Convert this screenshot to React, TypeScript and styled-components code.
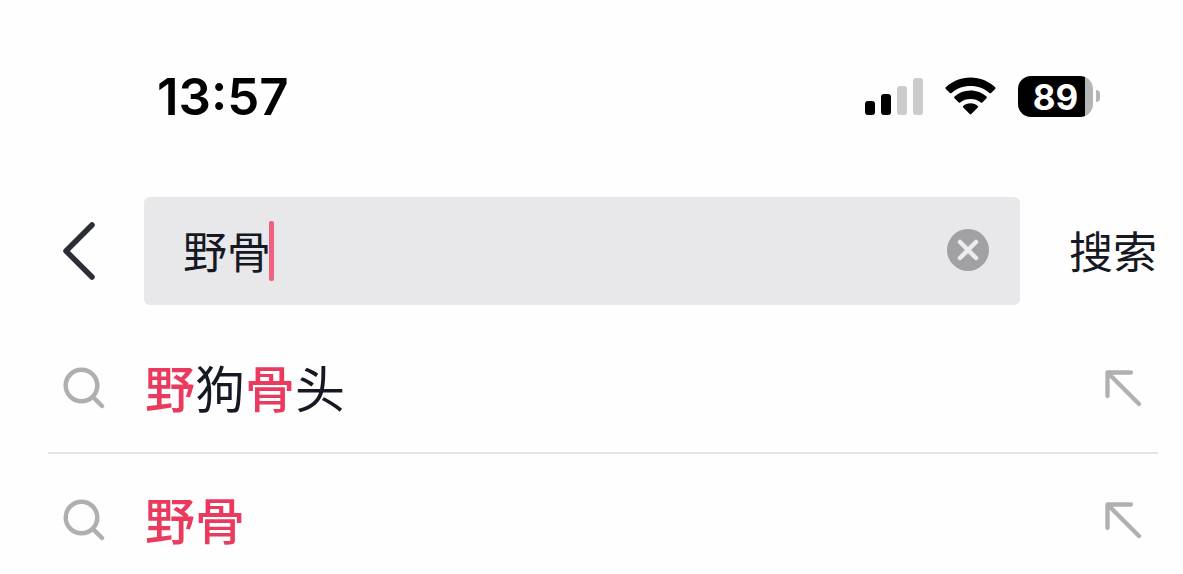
import React, { useState } from "react";
import styled, { createGlobalStyle } from "styled-components";

const cjk = `"Noto Sans CJK SC", "Noto Sans", sans-serif`;
const latin = `Inter, "Liberation Sans", sans-serif`;

const GlobalStyle = createGlobalStyle`
  *, *::before, *::after { box-sizing: border-box; }
  body { margin: 0; background: #fefefe; color: #161823; font-family: ${cjk}; }
  button, input { font: inherit; color: inherit; border: 0; padding: 0; margin: 0; background: none; }
  button { cursor: pointer; }
  svg { display: block; flex: none; }
`;

const Screen = styled.div`
  display: flex;
  flex-direction: column;
`;

const StatusBar = styled.header`
  display: flex;
  align-items: center;
  justify-content: space-between;
  padding: 67px 83px 0 157px;
  height: 127px;
  color: #000;
  font-family: ${latin};
`;

const Clock = styled.time`
  font-size: 51px;
  font-weight: 600;
  line-height: 60px;
`;

const StatusIcons = styled.div`
  display: flex;
  align-items: center;
  gap: 22px;
  padding-bottom: 2px;
`;

const Battery = styled.div`
  display: flex;
  align-items: center;
  gap: 3px;
`;

const BatteryBody = styled.div`
  width: 75px;
  height: 41px;
  border-radius: 13px;
  background: linear-gradient(to right, #000 67px, #b5b5b5 67px);
  color: #fff;
  font-size: 35px;
  font-weight: 700;
  line-height: 42px;
  text-align: center;
`;

const BatteryNub = styled.div`
  width: 4px;
  height: 12px;
  border-radius: 0 4px 4px 0;
  background: #b5b5b5;
`;

const SearchBar = styled.form`
  display: flex;
  align-items: center;
  margin-top: 70px;
  padding: 0 26px 0 60px;
`;

const BackButton = styled.button`
  width: 84px;
`;

const Field = styled.label`
  display: flex;
  flex: 1;
  align-items: center;
  min-width: 0;
  height: 108px;
  padding: 0 31px 0 39px;
  border-radius: 6px;
  background: #e8e8ea;
`;

const Query = styled.input`
  field-sizing: content;
  min-width: 0;
  height: 64px;
  padding-bottom: 2px;
  outline: 0;
  caret-color: transparent;
  font-size: 44px;
  line-height: 62px;
`;

const Caret = styled.span`
  width: 5px;
  height: 60px;
  margin-left: -2px;
  border-radius: 2px;
  background: #f0607f;
`;

const ClearButton = styled.button`
  margin-left: auto;
  padding-bottom: 2px;
`;

const SubmitButton = styled.button`
  margin-left: 49px;
  padding-bottom: 2px;
  font-size: 44px;
  line-height: 62px;
  white-space: nowrap;
`;

const Suggestions = styled.ul`
  margin: 17px 25px 0 48px;
  padding: 0;
  list-style: none;
`;

const Suggestion = styled.li`
  display: flex;
  align-items: center;
  justify-content: space-between;
  padding: 29px 16px 27px 15px;
  border-bottom: 2px solid #e4e4e5;

  &:last-child {
    padding-bottom: 12px;
    border-bottom: 0;
  }
`;

const SuggestionLink = styled.a`
  display: flex;
  flex: 1;
  align-items: center;
  gap: 40px;
  color: inherit;
  text-decoration: none;
`;

const SuggestionText = styled.span`
  padding-bottom: 4px;
  font-size: 50px;
  line-height: 70px;
`;

const Match = styled.mark`
  background: none;
  color: #ea3a5d;
  font-weight: 500;
`;

const SignalIcon = () => (
  <svg width="58" height="38" viewBox="0 0 58 38" aria-hidden="true">
    <rect x="0" y="24" width="10" height="14" rx="3" />
    <rect x="16" y="17" width="10" height="21" rx="3" />
    <rect x="32" y="9" width="10" height="29" rx="3" fill="#cbcbcb" />
    <rect x="48" y="1" width="10" height="37" rx="3" fill="#cbcbcb" />
  </svg>
);

const WifiIcon = () => (
  <svg width="51" height="38" viewBox="0 0 51 38" aria-hidden="true">
    <path d="M25.500 0.500C35 0.500 43.700 4.100 50.200 10.300Q51 11.100 50.200 11.900L46 16Q45.300 16.700 44.500 16C39.300 11.500 33 9 25.500 9S11.700 11.500 6.500 16Q5.700 16.700 5 16L.8 11.900Q0 11.100.8 10.300C7.300 4.100 16 0.500 25.500 0.500Z" />
    <path d="M25.500 13.500C31.600 13.500 37.200 15.800 41.500 19.600Q42.300 20.400 41.500 21.200L37.300 25.400Q36.600 26.100 35.800 25.400C33 23 29.600 21.900 25.500 21.900S18 23 15.200 25.400Q14.400 26.100 13.700 25.400L9.500 21.200Q8.700 20.400 9.500 19.600C13.800 15.800 19.400 13.500 25.500 13.500Z" />
    <path d="M25.500 26.300C28.300 26.300 30.800 27.300 32.800 28.900Q33.600 29.700 32.800 30.500L26.300 37Q25.500 37.800 24.700 37L18.200 30.500Q17.400 29.700 18.200 28.900C20.200 27.300 22.700 26.300 25.500 26.300Z" />
  </svg>
);

const BackIcon = () => (
  <svg width="36" height="60" viewBox="0 0 36 60" fill="none" stroke="#2b2d37" strokeWidth="5.500" strokeLinecap="round" strokeLinejoin="round" aria-hidden="true">
    <path d="M32 4L6 30L32 56" />
  </svg>
);

const ClearIcon = () => (
  <svg width="42" height="42" viewBox="0 0 42 42" aria-hidden="true">
    <circle cx="21" cy="21" r="21" fill="#a0a0a5" />
    <path d="M13 13L29 29M29 13L13 29" stroke="#ececee" strokeWidth="4.500" strokeLinecap="round" />
  </svg>
);

const SearchIcon = () => (
  <svg width="42" height="42" viewBox="0 0 42 42" fill="none" stroke="#afafb2" strokeWidth="4.500" strokeLinecap="round" aria-hidden="true">
    <circle cx="18.500" cy="18.500" r="15.800" />
    <path d="M30 30L39 39" />
  </svg>
);

const FillIcon = () => (
  <svg width="38" height="38" viewBox="0 0 38 38" fill="none" stroke="#b0b0b2" strokeWidth="4.300" strokeLinecap="round" strokeLinejoin="round" aria-hidden="true">
    <path d="M27 3.500H3.500V27M3.500 3.500L35 35" />
  </svg>
);

const suggestions = ["野狗骨头", "野骨"];
const highlighted = "野骨";

export default function App() {
  const [query, setQuery] = useState("野骨");

  return (
    <Screen>
      <GlobalStyle />
      <StatusBar>
        <Clock>13:57</Clock>
        <StatusIcons>
          <SignalIcon />
          <WifiIcon />
          <Battery>
            <BatteryBody>89</BatteryBody>
            <BatteryNub />
          </Battery>
        </StatusIcons>
      </StatusBar>
      <main>
        <SearchBar role="search" onSubmit={(e) => e.preventDefault()}>
          <BackButton type="button" aria-label="返回">
            <BackIcon />
          </BackButton>
          <Field>
            <Query
              type="text"
              aria-label="搜索"
              value={query}
              onChange={(e) => setQuery(e.target.value)}
            />
            <Caret />
            <ClearButton type="button" aria-label="清除" onClick={() => setQuery("")}>
              <ClearIcon />
            </ClearButton>
          </Field>
          <SubmitButton type="submit">搜索</SubmitButton>
        </SearchBar>
        <Suggestions>
          {suggestions.map((text) => (
            <Suggestion key={text}>
              <SuggestionLink href="#">
                <SearchIcon />
                <SuggestionText>
                  {[...text].map((char, i) =>
                    highlighted.includes(char) ? <Match key={i}>{char}</Match> : char
                  )}
                </SuggestionText>
              </SuggestionLink>
              <button type="button" aria-label={`填入 ${text}`} onClick={() => setQuery(text)}>
                <FillIcon />
              </button>
            </Suggestion>
          ))}
        </Suggestions>
      </main>
    </Screen>
  );
}
